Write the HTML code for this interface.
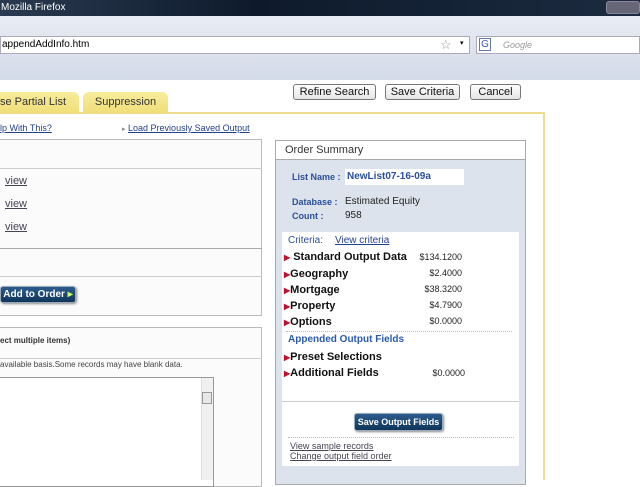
<!DOCTYPE html>
<html><head><style>
*{margin:0;padding:0;box-sizing:border-box}
body{width:640px;height:480px;overflow:hidden;position:relative;background:#fff;font-family:"Liberation Sans",sans-serif;font-size:11px}
.a{position:absolute;white-space:nowrap}
.btn{position:absolute;border:1px solid #777;border-radius:3px;background:linear-gradient(#fff,#e4e4e4);font-size:11px;text-align:center;line-height:14px;color:#111;white-space:nowrap}
.lk{color:#23418a;text-decoration:underline}
.tri{color:#c0122c;font-size:8px}
.row{position:absolute;left:284px;font-weight:bold;font-size:11px;color:#111;white-space:nowrap}
.pr{position:absolute;font-size:9px;color:#222;text-align:right;width:60px}
.bb{position:absolute;background:linear-gradient(#2c5b8c,#0f3559);color:#fff;font-weight:bold;border-radius:3px;border:1px solid #9ab;text-align:center;box-shadow:1px 1px 2px #888;white-space:nowrap;overflow:hidden}
</style></head><body>
<div class="a" style="left:0;top:0;width:640px;height:16px;background:linear-gradient(90deg,#2a3a50,#0e1a2c 40%,#1c2b40);color:#fff;font-size:10px;line-height:16px;padding-left:1px">Mozilla Firefox</div>
<div class="a" style="left:606px;top:1px;width:34px;height:13px;border:1px solid #889;border-radius:3px;background:#667"></div>
<div class="a" style="left:0;top:16px;width:640px;height:64px;background:linear-gradient(#e8ecf4,#d3dae8)"></div>
<div class="a" style="left:0;top:36px;width:470px;height:18px;background:#fff;border:1px solid #aab;font-size:10px;line-height:16px;padding-left:1px">appendAddInfo.htm</div>
<div class="a" style="left:440px;top:37px;color:#999;font-size:13px">☆</div>
<div class="a" style="left:460px;top:39px;font-size:7px">▾</div>
<div class="a" style="left:476px;top:36px;width:164px;height:18px;background:#fff;border:1px solid #aab;font-size:9px;line-height:16px;color:#999;padding-left:26px;font-style:italic">Google</div>
<div class="a" style="left:479px;top:38px;width:12px;height:13px;border:1px solid #67a;color:#3555c0;font-size:10px;line-height:11px;text-align:center">G</div>
<div class="a" style="left:0;top:112px;width:545px;height:2px;background:#eedd90"></div>
<div class="a" style="left:543px;top:112px;width:2px;height:368px;background:#eedd90"></div>
<div class="a" style="left:0;top:92px;width:79px;height:21px;background:linear-gradient(#f8ec9c,#f0de78);border-radius:0 6px 0 0;font-size:11px;line-height:21px;color:#333">se Partial List</div>
<div class="a" style="left:83px;top:92px;width:85px;height:21px;background:linear-gradient(#f8ec9c,#f0de78);border-radius:6px 6px 0 0;font-size:11px;line-height:21px;color:#333;text-align:center">Suppression</div>
<div class="btn" style="left:293px;top:84px;width:83px;height:16px">Refine Search</div>
<div class="btn" style="left:385px;top:84px;width:75px;height:16px">Save Criteria</div>
<div class="btn" style="left:470px;top:84px;width:51px;height:16px">Cancel</div>
<div class="a lk" style="left:0;top:123px;font-size:9px">lp With This?</div>
<div class="a" style="left:122px;top:123px;font-size:9px"><span style="color:#888;font-size:7px">▸</span> <span class="lk">Load Previously Saved Output</span></div>
<div class="a" style="left:-2px;top:139px;width:264px;height:177px;border:1px solid #bbb;background:#fbfbfb"></div>
<div class="a" style="left:0;top:168px;width:262px;height:1px;background:#ccc"></div>
<div class="a" style="left:0;top:248px;width:262px;height:1px;background:#aaa"></div>
<div class="a" style="left:0;top:276px;width:262px;height:1px;background:#ccc"></div>
<div class="a lk" style="left:5px;top:175px;color:#445">view</div>
<div class="a lk" style="left:5px;top:198px;color:#445">view</div>
<div class="a lk" style="left:5px;top:221px;color:#445">view</div>
<div class="bb" style="left:0;top:286px;width:76px;height:17px;font-size:10px;line-height:15px">Add to Order <span style="color:#cf6">▸</span></div>
<div class="a" style="left:-2px;top:327px;width:264px;height:160px;border:1px solid #bbb;background:#fbfbfb"></div>
<div class="a" style="left:0;top:336px;font-size:8px;font-weight:bold;color:#333">ect multiple items)</div>
<div class="a" style="left:0;top:358px;width:262px;height:1px;background:#ccc"></div>
<div class="a" style="left:0;top:360px;font-size:8px;color:#444">available basis.Some records may have blank data.</div>
<div class="a" style="left:-2px;top:377px;width:216px;height:110px;border:1px solid #999;background:#fff"></div>
<div class="a" style="left:201px;top:378px;width:12px;height:102px;background:#f0f0f0;border-left:1px solid #ddd"></div>
<div class="a" style="left:202px;top:392px;width:10px;height:12px;border:1px solid #999;background:#e8e8e8"></div>
<div class="a" style="left:275px;top:140px;width:251px;height:345px;border:1px solid #aaa;background:#dde3ec"></div>
<div class="a" style="left:276px;top:141px;width:249px;height:19px;background:#fff;border-bottom:1px solid #aaa;font-size:11px;line-height:18px;padding-left:9px;color:#333">Order Summary</div>
<div class="a" style="left:292px;top:172px;font-size:9px;font-weight:bold;color:#2a4f9a">List Name :</div>
<div class="a" style="left:345px;top:169px;width:119px;height:16px;background:#fff;color:#2a4f9a;font-weight:bold;font-size:10px;line-height:16px;padding-left:2px">NewList07-16-09a</div>
<div class="a" style="left:292px;top:197px;font-size:9px;font-weight:bold;color:#2a4f9a">Database :</div>
<div class="a" style="left:292px;top:211px;font-size:9px;font-weight:bold;color:#2a4f9a">Count :</div>
<div class="a" style="left:345px;top:196px;font-size:10px;color:#222">Estimated Equity</div>
<div class="a" style="left:345px;top:210px;font-size:10px;color:#222">958</div>
<div class="a" style="left:282px;top:232px;width:237px;height:234px;background:#fff"></div>
<div class="a" style="left:282px;top:401px;width:237px;height:1px;background:#ccc"></div>
<div class="a" style="left:288px;top:235px;font-size:10px;color:#2a4f9a">Criteria:</div>
<div class="a lk" style="left:335px;top:235px;font-size:10px">View criteria</div>
<div class="row" style="top:251px"><span class="tri">▶</span> Standard Output Data</div>
<div class="row" style="top:268px"><span class="tri">▶</span>Geography</div>
<div class="row" style="top:284px"><span class="tri">▶</span>Mortgage</div>
<div class="row" style="top:300px"><span class="tri">▶</span>Property</div>
<div class="row" style="top:316px"><span class="tri">▶</span>Options</div>
<div class="pr" style="left:402px;top:252px">$134.1200</div>
<div class="pr" style="left:402px;top:268px">$2.4000</div>
<div class="pr" style="left:402px;top:284px">$38.3200</div>
<div class="pr" style="left:402px;top:300px">$4.7900</div>
<div class="pr" style="left:402px;top:316px">$0.0000</div>
<div class="a" style="left:286px;top:331px;width:226px;border-top:1px dotted #bbb"></div>
<div class="a" style="left:288px;top:334px;font-size:10px;color:#2a5ab0;font-weight:bold">Appended Output Fields</div>
<div class="row" style="top:351px"><span class="tri">▶</span>Preset Selections</div>
<div class="row" style="top:367px"><span class="tri">▶</span>Additional Fields</div>
<div class="pr" style="left:405px;top:368px">$0.0000</div>
<div class="bb" style="left:354px;top:413px;width:89px;height:18px;font-size:9px;line-height:16px">Save Output Fields</div>
<div class="a" style="left:288px;top:437px;width:226px;border-top:1px dotted #bbb"></div>
<div class="a lk" style="left:290px;top:441px;font-size:9px;color:#445">View sample records</div>
<div class="a lk" style="left:290px;top:451px;font-size:9px;color:#445">Change output field order</div>
</body></html>
